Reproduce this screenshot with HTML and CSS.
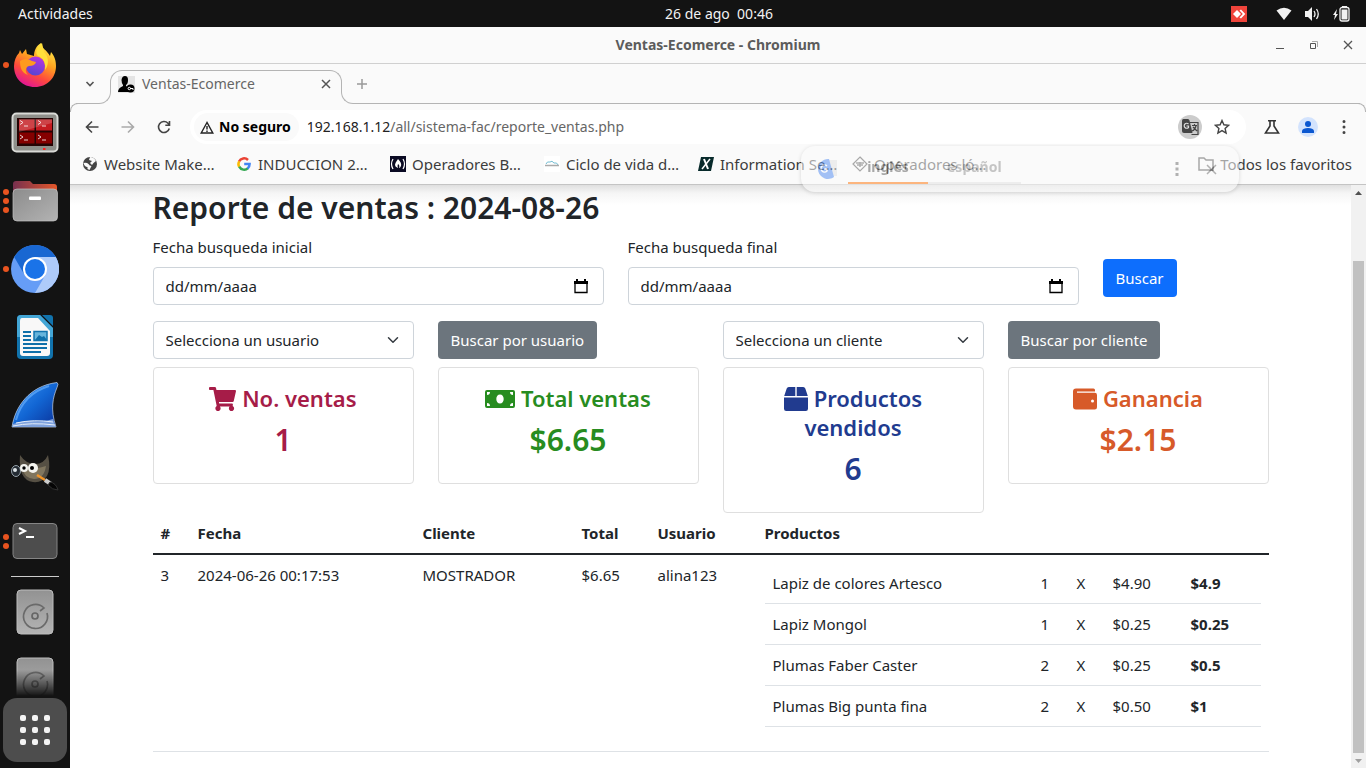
FILE: index.html
```html
<!DOCTYPE html>
<html lang="es">
<head>
<meta charset="utf-8">
<title>Ventas-Ecomerce</title>
<link rel="stylesheet" href="styles.css">
</head>
<body>
<header class="topbar">
  <button class="activities">Actividades</button>
  <button class="clock">26 de ago&nbsp; 00:46</button>
  <div class="indicators">
    <svg class="anydesk" width="16" height="16" viewBox="0 0 16 16"><path fill="#ef443b" d="M0 0h16v16H0z"/><path fill="#fff" d="M2 8l4-4 4 4-4 4zM8.500 4.500L10 3.500 14.300 8 10 12.500 8.500 11.500 11.800 8z"/></svg>
    <svg width="16" height="16" viewBox="0 0 16 16"><path fill="#f2f2f2" d="M.5 4.500Q8-1 15.500 4.500L8 14z"/></svg>
    <svg width="16" height="16" viewBox="0 0 16 16"><path fill="#f2f2f2" d="M1 5h3l4-4v14l-4-4H1z"/><path fill="none" stroke="#f2f2f2" stroke-width="1.300" d="M10 5q2 3 0 6M12.500 3q3.500 5 0 10"/></svg>
    <svg width="18" height="16" viewBox="0 0 18 16"><path fill="#f2f2f2" d="M5 3L1 9h2l-1 5 4-6H4zM10 0h5v2h-5z"/><rect x="8" y="1.500" width="9" height="13.500" rx="2" fill="none" stroke="#f2f2f2" stroke-width="1.300"/><path fill="#f2f2f2" d="M9.500 3.500h6v10h-6z"/></svg>
  </div>
</header>
<div class="desktop">
  <nav class="dock" aria-label="Aplicaciones">
    <div class="dock-list">
      <button class="dock-item" aria-label="Firefox"><span class="dots"><i></i></span>
        <svg width="48" height="48" viewBox="0 0 48 48"><defs><linearGradient id="ff" x1=".8" y1="0" x2=".3" y2="1"><stop offset="0" stop-color="#fff44f"/><stop offset=".4" stop-color="#ffa21f"/><stop offset=".7" stop-color="#ff4a3c"/><stop offset="1" stop-color="#e0139a"/></linearGradient><linearGradient id="fp" x1=".7" y1="0" x2=".3" y2="1"><stop offset="0" stop-color="#b833e1"/><stop offset="1" stop-color="#5346d0"/></linearGradient></defs><path fill="url(#ff)" d="M24 46C11 46 3 37 3 25c0-5 2-10 5-13l1-3 2 4 4-5 1 5 7 2c0-5 2-10 7-13 0 5 6 7 9 13l1-4c4 5 5 9 5 14 0 12-9 21-21 21z"/><circle cx="24.500" cy="25" r="9.500" fill="url(#fp)"/><path fill="#ff9a1f" d="M9 20q6-4 12 0l4 1q-1 4-7 4c-4 1-4 6-1 9-6-2-8-7-8-14z"/><path fill="#ffdf3b" d="M31 2c-6 5-7 10-4 13 6 2 8 8 7 14 5-7 3-14-1-18z"/></svg></button>
      <button class="dock-item" aria-label="Terminator"><svg width="48" height="44" viewBox="0 0 48 44"><rect x="1.500" y="2.500" width="45" height="38" rx="4" fill="#8e8f8a" stroke="#d9dad6" stroke-width="2"/><path fill="#260404" d="M6 7h36v28H6z"/><path fill="#c41a20" d="M8 8.500h15.500v11H8zM25 8.500h16v11H25z"/><path fill="#850000" d="M8 21.500h15.500v11H8zM25 21.500h16v11H25z"/><path fill="#fff" opacity=".18" d="M8 8h33v4L8 21z"/><path fill="none" stroke="#fff" stroke-width=".8" d="M9 9.500l3 2-3 2M13 15h4M27 9.500l3 2-3 2M31 15h4M9 24l3 2-3 2M13 29h4M27 24l3 2-3 2M31 29h4"/><path fill="#f22" d="M32 37h2.500v2H32z"/></svg></button>
      <button class="dock-item" aria-label="Archivos"><span class="dots"><i></i><i></i><i></i></span><svg width="48" height="44" viewBox="0 0 48 44"><defs><linearGradient id="fo"><stop offset="0" stop-color="#77304f"/><stop offset="1" stop-color="#e4572a"/></linearGradient><linearGradient id="fg" x2="1" y2="1"><stop offset="0" stop-color="#8c8c8c"/><stop offset="1" stop-color="#b3b3b3"/></linearGradient></defs><path fill="url(#fo)" d="M2 20V5q0-3 3-3h14l3 3h21q3 0 3 3v12z"/><rect x="2" y="10" width="44.500" height="32" rx="4" fill="url(#fg)" stroke="#c3c3c3" stroke-width=".7"/><rect x="18" y="17.500" width="12" height="3.500" rx="1" fill="#fff"/></svg></button>
      <button class="dock-item" aria-label="Chromium"><span class="dots"><i></i></span><svg width="48" height="48" viewBox="0 0 48 48"><circle cx="24" cy="24" r="24" fill="#669df6"/><path fill="#1967d2" d="M3.200 12A24 24 0 0 1 44.800 12H24L13.600 30z"/><path fill="#aecbfa" d="M44.800 12A24 24 0 0 1 24 48L34.400 30 24 12z"/><circle cx="24" cy="24" r="12" fill="#fff"/><circle cx="24" cy="24" r="10" fill="#1a73e8"/></svg></button>
      <button class="dock-item" aria-label="LibreOffice Writer"><svg width="40" height="46" viewBox="0 0 40 46"><path fill="#1173ad" d="M6 1h19l13 13v27q0 4-4 4H6q-4 0-4-4V5q0-4 4-4z"/><path fill="#43a6d6" d="M6 1h19l13 13v9H2V5q0-4 4-4z"/><path fill="#f8f8f8" d="M7 4h16l12 13v22q0 3-3 3H8q-3 0-3-3V7q0-3 2-3z"/><path fill="#1173ad" d="M27 1h8q3 0 3 3v8z"/><path fill="#67b5dc" stroke="#1173ad" stroke-width="1.500" d="M19 17.500h13v9H19z"/><path fill="#0f70aa" d="M8 17h8v2H8zM8 21h8v2H8zM8 25h8v2H8zM8 29h24v2H8zM8 33h24v2H8zM8 37h18v2H8zM20 26l4-5 3 2 2-1 3 4z"/></svg></button>
      <button class="dock-item" aria-label="Wireshark"><svg width="48" height="48" viewBox="0 0 48 48"><defs><linearGradient id="ws" x2="1" y2="1"><stop offset="0" stop-color="#3a93f4"/><stop offset=".5" stop-color="#1266d4"/><stop offset="1" stop-color="#0a2f96"/></linearGradient></defs><path fill="url(#ws)" stroke="#c5d4e5" stroke-width=".7" d="M1 46C4 26 18 5 46 1.500q2 1 0 5C42 16 39 28 45 46z"/><path fill="#7fa2dd" d="M2 43q12-4 22-3t18-2l2.500 8H1.500z"/><path fill="none" stroke="#e3ecf8" d="M2 45q18-4 42-1M5 42q18-4 37-1"/><path fill="none" stroke="#71b7ff" stroke-width="2" opacity=".6" d="M5 39Q12 13 38 5"/></svg></button>
      <button class="dock-item" aria-label="GIMP"><svg width="48" height="44" viewBox="0 0 48 44"><path fill="#565044" d="M9 4q6 9 15 9T37 4q3 14-1 21-5 7-14 6Q7 29 9 4z"/><path fill="#80765f" d="M11 17q9 3 24-2-2 13-12 13-10-1-12-11z"/><ellipse cx="5" cy="20" rx="4.500" ry="5.500" fill="#242b33" stroke="#96a2aa"/><circle cx="4" cy="19" r="2" fill="#dee5e8"/><circle cx="13" cy="17" r="4" fill="#f3f3ee"/><circle cx="13" cy="17" r="1.700"/><circle cx="22" cy="17" r="5" fill="#f3f3ee"/><circle cx="21" cy="17" r="2"/><path stroke="#f29528" stroke-width="2.500" d="M26 24l8 5"/><path stroke="#ccc" stroke-width="4" d="M34 29l6 4"/><path fill="#050505" stroke="#333" d="M39 31q6 1 8 8-6 0-10-5z"/></svg></button>
      <button class="dock-item" aria-label="Terminal"><span class="dots"><i></i><i></i></span><svg width="46" height="38" viewBox="0 0 46 38"><rect x="1" y="1.500" width="44" height="35" rx="4" fill="#4d4d4d" stroke="#858585"/><path fill="none" stroke="#fff" stroke-width="2" d="M7 6l6 3-6 3M14 15h8"/></svg></button>
      <hr class="dock-line">
      <button class="dock-item" aria-label="Disco 1"><svg width="38" height="46" viewBox="0 0 38 46"><defs><linearGradient id="dk" x2="0" y2="1"><stop offset="0" stop-color="#929292"/><stop offset="1" stop-color="#b4b4b4"/></linearGradient></defs><rect x="1" y="1" width="36" height="44" rx="4" fill="url(#dk)" stroke="#bdbdbd"/><circle cx="19" cy="27" r="3" fill="none" stroke="#666" stroke-width="1.700"/><path fill="none" stroke="#6a6a6a" stroke-width="1.700" d="M24 22l4-3A12 12 0 1 0 31 24"/></svg></button>
      <button class="dock-item" aria-label="Disco 2"><svg width="38" height="46" viewBox="0 0 38 46"><rect x="1" y="1" width="36" height="44" rx="4" fill="url(#dk)" stroke="#bdbdbd"/><circle cx="19" cy="27" r="3" fill="none" stroke="#666" stroke-width="1.700"/><path fill="none" stroke="#6a6a6a" stroke-width="1.700" d="M24 22l4-3A12 12 0 1 0 31 24"/></svg></button>
    </div>
    <button class="apps" aria-label="Mostrar aplicaciones"><i></i><i></i><i></i><i></i><i></i><i></i><i></i><i></i><i></i></button>
  </nav>

  <section class="window">
    <div class="titlebar">
      <strong class="window-title">Ventas-Ecomerce - Chromium</strong>
      <div class="window-buttons">
        <button aria-label="Minimizar"><svg width="12" height="12" viewBox="0 0 12 12"><path stroke="#555" d="M2 9.500h8"/></svg></button>
        <button aria-label="Restaurar"><svg width="12" height="12" viewBox="0 0 12 12"><path fill="none" stroke="#555" d="M2.500 4.500h5v5h-5z"/><path fill="none" stroke="#aaa" d="M4 2.500h5.500V8"/></svg></button>
        <button aria-label="Cerrar ventana"><svg width="12" height="12" viewBox="0 0 12 12"><path stroke="#555" stroke-width="1.300" d="M2 2l8 8M10 2l-8 8"/></svg></button>
      </div>
    </div>
    <div class="tabs">
      <div class="tabs-left"><button aria-label="Buscar pestañas"><svg width="10" height="10" viewBox="0 0 10 10"><path fill="none" stroke="#555" stroke-width="1.600" d="M1.500 3L5 6.500 8.500 3"/></svg></button></div>
      <div class="tab">
        <svg width="17" height="17" viewBox="0 0 17 17"><path fill="#e4e4e4" d="M0 0h17v17H0z"/><path d="M3.500 4Q4 0 7 0t3 4-2 5v1l4 2v4H0q0-4 5-6V9Q3.500 7 3.500 4z"/><circle cx="12.500" cy="12.500" r="4"/><path stroke="#fff" fill="none" d="M12 12.500h3v1.500"/><circle cx="11.300" cy="12.500" r="1.200" fill="none" stroke="#fff"/></svg>
        <span class="tab-title">Ventas-Ecomerce</span>
        <button aria-label="Cerrar pestaña"><svg width="10" height="10" viewBox="0 0 10 10"><path stroke="#555" stroke-width="1.500" d="M1 1l8 8M9 1L1 9"/></svg></button>
      </div>
      <div class="tabs-right"><button aria-label="Nueva pestaña"><svg width="12" height="12" viewBox="0 0 12 12"><path stroke="#999" stroke-width="1.500" d="M6 1v10M1 6h10"/></svg></button></div>
    </div>
    <div class="toolbar">
      <div class="nav-buttons">
        <button aria-label="Atrás"><svg width="14" height="14" viewBox="0 0 14 14"><path fill="none" stroke="#444" stroke-width="1.600" d="M13.500 7H1.500M7 1.500L1.500 7 7 12.500"/></svg></button>
        <button aria-label="Adelante"><svg width="14" height="14" viewBox="0 0 14 14"><path fill="none" stroke="#aaa" stroke-width="1.600" d="M.5 7h12M7 1.500L12.500 7 7 12.500"/></svg></button>
        <button aria-label="Recargar"><svg width="14" height="14" viewBox="0 0 14 14"><path fill="none" stroke="#444" stroke-width="1.600" d="M12.300 8.500A5.500 5.500 0 1 1 11 3.200L12.500 5M12.500 1v4.200H8.300"/></svg></button>
      </div>
      <div class="omnibox">
        <button class="security"><svg width="14" height="13" viewBox="0 0 14 13"><path fill="none" stroke="#222" stroke-width="1.400" d="M7 1.500L1.200 12h11.600z"/><path stroke="#222" stroke-width="1.400" d="M7 5v3.500M7 9.500V11"/></svg>No seguro</button>
        <div class="url"><b>192.168.1.12</b>/all/sistema-fac/reporte_ventas.php</div>
        <button class="translate-button" aria-label="Traducir"><svg width="17" height="17" viewBox="0 0 17 17"><path fill="#444" d="M1.500 0H6q1 0 1.500 1.500L10.500 14H2q-2 0-2-2V1.500Q0 0 1.500 0z"/><path fill="none" stroke="#444" stroke-width="1.200" d="M8 3.500h8v12H9.500M10 6.500h5M12.500 5v1.500M14 7q-1 4-4 5M11 8l4 4"/><path fill="none" stroke="#ddd" stroke-width="1.200" d="M6.500 5A2.500 2.500 0 1 0 6.500 8.500V7H4.500"/></svg></button>
        <button aria-label="Añadir a favoritos"><svg width="16" height="16" viewBox="0 0 16 16"><path fill="none" stroke="#444" stroke-width="1.400" d="M8 1.500l1.900 4.300 4.700.5-3.500 3.100 1 4.600L8 11.600 3.900 14l1-4.600L1.400 6.300l4.700-.5z"/></svg></button>
      </div>
      <button aria-label="Experimentos"><svg width="16" height="16" viewBox="0 0 16 16"><path fill="none" stroke="#333" stroke-width="1.600" d="M4 1.800h8M6 2v5l-4.500 7h13L10 7V2"/></svg></button>
      <button class="profile" aria-label="Perfil"><svg width="12" height="12" viewBox="0 0 12 12"><circle cx="6" cy="3" r="3" fill="#0b57d0"/><path fill="#0b57d0" d="M0 12V9.500Q1 7 6 7t6 2.500V12z"/></svg></button>
      <button aria-label="Menú"><svg width="4" height="16" viewBox="0 0 4 16"><path fill="#444" d="M2 1a1.500 1.500 0 1 1 0 3 1.500 1.500 0 0 1 0-3zM2 6.500a1.500 1.500 0 1 1 0 3 1.500 1.500 0 0 1 0-3zM2 12a1.500 1.500 0 1 1 0 3 1.500 1.500 0 0 1 0-3z"/></svg></button>
    </div>
    <nav class="bookmarks" aria-label="Favoritos">
      <a href="#"><svg width="16" height="16" viewBox="0 0 16 16"><circle cx="8" cy="8" r="7" fill="#444"/><path fill="#fafafa" d="M1.500 7q3-1 5 1 1 2 3 2-1 2-2 4l-2-1V11q-3 0-4-4zM8 1q4 0 6 4-3 2-4 4L8 7l2-2-3-1z"/></svg><span>Website Make…</span></a>
      <a href="#"><svg width="16" height="14" viewBox="-1 0 16 14" fill="none" stroke-width="2.500"><path stroke="#ea4335" d="M2 4.500A5.600 5.600 0 0 1 11 3"/><path stroke="#fbbc05" d="M2.200 4.300a5.500 5.500 0 0 0 0 5.500"/><path stroke="#34a853" d="M2.200 9.700A5.600 5.600 0 0 0 11 11.200"/><path stroke="#4285f4" d="M7.200 7h5.400q0 2.800-2 4.500"/></svg><span>INDUCCION 2…</span></a>
      <a href="#"><svg width="16" height="16" viewBox="0 0 16 16"><path fill="#0a0a23" d="M0 0h16v16H0z"/><path fill="none" stroke="#fff" stroke-width="1.200" d="M3 3Q0 8 3 13M13 3q3 5 0 10"/><path fill="#fff" d="M8 3q4 4 3 7-1 2-2 2 1-3-1-4-1 2 0 4-3-1-3-3 0-2 3-6z"/></svg><span>Operadores B…</span></a>
      <a href="#"><svg width="16" height="16" viewBox="0 0 16 16"><path fill="#fff" d="M0 0h16v16H0z"/><path fill="none" stroke="#75bed3" d="M2 8q1-3 4-2 2-2 4 1 3-1 4 2"/><path stroke="#aaa" stroke-width="1.500" d="M1 9.500h14"/></svg><span>Ciclo de vida d…</span></a>
      <a href="#"><svg width="16" height="14" viewBox="0 0 16 14"><path fill="#082a2b" d="M3 0h13l-3 14H0z"/><path stroke="#fff" stroke-width="2" d="M6 2l4 10"/><path stroke="#fff" stroke-width="1.500" d="M12 2L4 12"/></svg><span>Information Se…</span></a>
      <a href="#"><svg width="16" height="16" viewBox="0 0 16 16"><path fill="none" stroke="#444" stroke-width="1.200" d="M8 1l7 7-7 7-7-7z"/><path stroke="#555" stroke-width="1.500" d="M4 7h8M5 9h6M8 6v5"/></svg><span>Operadores ló…</span></a>
      <a class="all-bookmarks" href="#"><svg width="16" height="14" viewBox="0 0 16 14"><path fill="none" stroke="#444" stroke-width="1.500" d="M1 1h5l2 2h7v10H1z"/></svg><span>Todos los favoritos</span></a>
    </nav>
    <div class="translate-popup">
      <svg width="22" height="22" viewBox="0 0 22 22"><path fill="#e3e3e3" d="M10 2h10v16H10z"/><path fill="#5b92f1" d="M12 1L17 19A10 10 0 1 1 12 1z"/><path fill="none" stroke="#fff" stroke-width="1.500" d="M10 8a3.500 3.500 0 1 0 0 5v-2H7"/></svg>
      <button class="lang lang-active">inglés</button><button class="lang">español</button>
      <button class="popup-more" aria-label="Opciones"><svg width="4" height="14" viewBox="0 0 4 14"><path fill="#777" d="M.5 0h3v3h-3zM.5 5.500h3v3h-3zM.5 11h3v3h-3z"/></svg></button>
      <button aria-label="Cerrar traducción"><svg width="12" height="12" viewBox="0 0 12 12"><path stroke="#777" stroke-width="1.500" d="M2 2l9 9M11 2l-9 9"/></svg></button>
    </div>

    <div class="viewport">
      <main class="page">
        <div class="container">
          <h2>Reporte de ventas : 2024-08-26</h2>
          <form class="grid dates">
            <div class="span5">
              <label for="inicio">Fecha busqueda inicial</label>
              <div class="date"><input id="inicio" type="text" placeholder="dd/mm/aaaa"><svg width="14" height="15" viewBox="0 0 14 15"><path d="M0 2h14v3H0zM2 0h2v3H2zM10 0h2v3h-2z"/><path fill="none" stroke="#000" stroke-width="1.300" d="M1 3h12v10.500H1z"/></svg></div>
            </div>
            <div class="span5">
              <label for="final">Fecha busqueda final</label>
              <div class="date"><input id="final" type="text" placeholder="dd/mm/aaaa"><svg width="14" height="15" viewBox="0 0 14 15"><path d="M0 2h14v3H0zM2 0h2v3H2zM10 0h2v3h-2z"/><path fill="none" stroke="#000" stroke-width="1.300" d="M1 3h12v10.500H1z"/></svg></div>
            </div>
            <div class="span2 search"><button class="btn primary" type="button">Buscar</button></div>
          </form>
          <form class="grid filters">
            <div class="span3 select"><select aria-label="Usuario"><option>Selecciona un usuario</option></select><svg width="12" height="12" viewBox="0 0 16 16"><path fill="none" stroke="#343a40" stroke-width="2" stroke-linecap="round" stroke-linejoin="round" d="M2 5l6 6 6-6"/></svg></div>
            <div class="span3"><button class="btn secondary" type="button">Buscar por usuario</button></div>
            <div class="span3 select"><select aria-label="Cliente"><option>Selecciona un cliente</option></select><svg width="12" height="12" viewBox="0 0 16 16"><path fill="none" stroke="#343a40" stroke-width="2" stroke-linecap="round" stroke-linejoin="round" d="M2 5l6 6 6-6"/></svg></div>
            <div class="span3"><button class="btn secondary" type="button">Buscar por cliente</button></div>
          </form>
          <div class="grid cards">
            <article class="span3 card crimson"><h4><svg width="27" height="24" viewBox="0 0 576 512"><path d="M528.120 301.319l47.273-208C578.806 78.301 567.391 64 551.990 64H159.208l-9.166-44.810C147.758 8.021 137.930 0 126.529 0H24C10.745 0 0 10.745 0 24v16c0 13.255 10.745 24 24 24h69.883l70.248 343.435C147.325 417.100 136 435.222 136 456c0 30.928 25.072 56 56 56s56-25.072 56-56c0-15.674-6.447-29.835-16.824-40h209.647C430.447 426.165 424 440.326 424 456c0 30.928 25.072 56 56 56s56-25.072 56-56c0-22.172-12.888-41.332-31.579-50.405l5.517-24.276c3.413-15.018-8.002-29.319-23.403-29.319H218.117l-6.545-32h293.145c11.206 0 20.920-7.754 23.403-18.681z"/></svg> No. ventas</h4><p>1</p></article>
            <article class="span3 card green"><h4><svg width="30" height="24" viewBox="0 0 30 24"><path fill-rule="evenodd" d="M2 3h26q2 0 2 2v14q0 2-2 2H2q-2 0-2-2V5q0-2 2-2zM2 5v3q3 0 3-3zM28 5h-3q0 3 3 3zM2 19h3q0-3-3-3zM28 19v-3q-3 0-3 3zM15 7.500c-2.200 0-3.700 2-3.700 4.500s1.500 4.500 3.700 4.500 3.700-2 3.700-4.500-1.500-4.500-3.700-4.500z"/></svg> Total ventas</h4><p>$6.65</p></article>
            <article class="span3 card blue"><h4><svg width="24" height="24" viewBox="0 0 24 24"><path d="M2.700 1.500Q3.200 0 4.800 0h6.500v9H.2zM12.700 0h6.500q1.600 0 2.100 1.500L23.800 9H12.700zM0 10.500h24v11.300q0 2.200-2.200 2.200H2.200Q0 24 0 21.800z"/></svg> Productos vendidos</h4><p>6</p></article>
            <article class="span3 card orange"><h4><svg width="24" height="24" viewBox="0 0 24 24"><path fill-rule="evenodd" d="M3 1.500h17.500q1.500 0 1.500 1.500v1.500H4v1.200h17.800Q24 5.700 24 8v12.200q0 2.300-2.300 2.300H3q-3 0-3-3v-15q0-3 3-3zM19.500 12.500a1.500 1.500 0 1 0 0 3 1.500 1.500 0 0 0 0-3z"/></svg> Ganancia</h4><p>$2.15</p></article>
          </div>
          <table class="sales">
            <colgroup><col class="c-id"><col class="c-date"><col class="c-client"><col class="c-total"><col class="c-user"><col></colgroup>
            <thead><tr><th>#</th><th>Fecha</th><th>Cliente</th><th>Total</th><th>Usuario</th><th>Productos</th></tr></thead>
            <tbody><tr><td>3</td><td>2024-06-26 00:17:53</td><td>MOSTRADOR</td><td>$6.65</td><td>alina123</td><td>
              <table class="items">
                <colgroup><col><col class="c-qty"><col class="c-qty"><col class="c-price"><col class="c-price"></colgroup>
                <tbody>
                  <tr><td>Lapiz de colores Artesco</td><td>1</td><td>X</td><td>$4.90</td><th>$4.9</th></tr>
                  <tr><td>Lapiz Mongol</td><td>1</td><td>X</td><td>$0.25</td><th>$0.25</th></tr>
                  <tr><td>Plumas Faber Caster</td><td>2</td><td>X</td><td>$0.25</td><th>$0.5</th></tr>
                  <tr><td>Plumas Big punta fina</td><td>2</td><td>X</td><td>$0.50</td><th>$1</th></tr>
                </tbody>
              </table>
            </td></tr></tbody>
          </table>
        </div>
      </main>
      <div class="scrollbar">
        <svg width="15" height="15" viewBox="0 0 15 15"><path fill="#505050" d="M4 10l3.500-4L11 10z"/></svg>
        <div class="track"><div class="thumb"></div></div>
        <svg width="15" height="15" viewBox="0 0 15 15"><path fill="#a0a0a0" d="M4 6l3.500 4L11 6z"/></svg>
      </div>
    </div>
  </section>
</div>
</body>
</html>
```
FILE: styles.css
```css
* { box-sizing: border-box; }
body {
  margin: 0;
  height: 100vh;
  display: flex;
  flex-direction: column;
  overflow: hidden;
  background: #131313;
  color: #212529;
  font: 15px/24px "Noto Sans", "Open Sans", sans-serif;
}
button { font: inherit; color: inherit; border: 0; padding: 0; background: none; }
svg { flex: none; }
a { color: inherit; text-decoration: none; }

/* Top bar */
.topbar {
  flex: none;
  height: 27px;
  display: grid;
  grid-template-columns: 1fr auto 1fr;
  align-items: center;
  padding: 0 16px 0 18px;
  background: #131313;
  color: #f2f2f2;
  font-size: 14px;
}
.activities { justify-self: start; }
.topbar .clock { padding-left: 70px; }
.indicators { display: flex; align-items: center; justify-content: flex-end; gap: 12px; }
.anydesk { margin-right: 17px; }

.desktop { flex: 1; min-height: 0; display: flex; }

/* Dock */
.dock { flex: none; width: 70px; display: flex; flex-direction: column; }
.dock-list {
  flex: 1;
  min-height: 0;
  overflow: hidden;
  padding-top: 4px;
  display: flex;
  flex-direction: column;
  mask-image: linear-gradient(#000 calc(100% - 26px), transparent);
}
.dock-item { flex: none; height: 68px; display: flex; align-items: center; justify-content: center; position: relative; }
.dots { position: absolute; left: 3px; top: 0; bottom: 0; display: flex; flex-direction: column; justify-content: center; gap: 3px; }
.dots i { width: 6px; height: 6px; border-radius: 50%; background: #e95420; }
.dock-line { flex: none; width: 48px; height: 1px; margin: 1px auto; border: 0; background: #ccc; }
.apps {
  flex: none;
  height: 64px;
  margin: 2px 3px 6px;
  border-radius: 14px;
  background: #4d4d4d;
  display: grid;
  grid-template-columns: repeat(3, 6px);
  grid-auto-rows: 6px;
  gap: 6px;
  place-content: center;
}
.apps i { background: #f4f4f4; border-radius: 2px; }

/* Browser window */
.window { flex: 1; min-width: 0; display: flex; flex-direction: column; position: relative; background: #fafafa; }
.titlebar {
  flex: none;
  height: 37px;
  display: grid;
  grid-template-columns: 1fr auto 1fr;
  align-items: center;
  padding: 0 12px;
  border-bottom: 1px solid #d0d0d0;
}
.window-title { grid-column: 2; font-size: 14px; color: #5c5c5c; }
.window-buttons { display: flex; justify-content: flex-end; gap: 22px; }
.window-buttons button, .tabs button, .toolbar button, .translate-popup button { display: flex; align-items: center; justify-content: center; }

.tabs { flex: none; height: 40px; display: flex; }
.tabs-left, .tabs-right { position: relative; display: flex; align-items: center; }
.tabs-left { width: 41px; padding-left: 15px; }
.tabs-right { flex: 1; margin-left: -1px; padding-left: 15px; }
.tabs-left::after, .tabs-right::after {
  content: "";
  position: absolute;
  left: 0;
  right: 0;
  bottom: 0;
  height: 12px;
  border-bottom: 1px solid #b4b4b4;
  pointer-events: none;
}
.tabs-left::after { left: 6px; border-right: 1px solid #b4b4b4; border-bottom-right-radius: 12px; }
.tabs-right::after { right: 6px; border-left: 1px solid #b4b4b4; border-bottom-left-radius: 12px; }
.tab { position: relative; width: 232px; margin: 6px 0 0 -1px; padding: 0 11px 6px 8px; display: flex; align-items: center; gap: 7px; color: #666; font-size: 14px; }
.tab::before {
  content: "";
  position: absolute;
  inset: 0 0 12px;
  border: 1px solid #b4b4b4;
  border-bottom: 0;
  border-radius: 12px 12px 0 0;
  pointer-events: none;
}
.tab-title { flex: 1; }

.toolbar { flex: none; position: relative; display: flex; align-items: center; gap: 18px; padding: 6px 20px 4px 15px; }
.toolbar::before, .toolbar::after {
  content: "";
  position: absolute;
  top: -1px;
  width: 8px;
  height: 8px;
  border-top: 1px solid #b4b4b4;
  pointer-events: none;
}
.toolbar::before { left: 0; border-left: 1px solid #b4b4b4; border-top-left-radius: 8px; }
.toolbar::after { right: 0; border-right: 1px solid #b4b4b4; border-top-right-radius: 8px; }
.nav-buttons { display: flex; gap: 22px; margin-right: 1px; }
.omnibox { flex: 1; height: 34px; display: flex; align-items: center; gap: 8px; padding: 0 16px 0 4px; border-radius: 17px; background: #fff; font-size: 14px; }
.toolbar .security { height: 28px; gap: 5px; padding: 0 8px 0 6px; border-radius: 14px; background: #fafafa; color: #000; font-weight: 700; }
.url { flex: 1; color: #666; white-space: nowrap; }
.url b { color: #222; font-weight: 400; }
.translate-button { width: 24px; height: 24px; margin-right: 4px; border-radius: 50%; background: #ccc; }
.profile { width: 20px; height: 20px; margin-right: 6px; border-radius: 50%; background: #d3e3fd; }

.bookmarks { flex: none; height: 37px; display: flex; align-items: center; padding: 0 14px 4px 12px; border-bottom: 1px solid #c4c4c4; color: #3c3c3c; font-size: 15px; white-space: nowrap; }
.bookmarks a { flex: 0 0 154px; display: flex; align-items: center; gap: 6px; }
.bookmarks .all-bookmarks { flex: none; margin-left: auto; }

.translate-popup {
  position: absolute;
  top: 119px;
  right: 127px;
  width: 438px;
  height: 46px;
  display: flex;
  align-items: center;
  padding: 0 22px 0 16px;
  border-radius: 14px;
  background: #fafafa;
  opacity: .55;
  box-shadow: 0 1px 4px #0004;
  font-size: 14px;
  font-weight: 700;
  color: #999;
}
.lang { height: 38px; align-self: flex-start; padding: 6px 19px 0; border-bottom: 2px solid #e4e4e4; flex: 0 0 92px; }
.translate-popup .lang-active { margin-left: 9px; flex-basis: 80px; color: #666; border-color: #ff7d1a; }
.popup-more { margin: 0 26px 0 auto; }

/* Page */
.viewport { flex: 1; min-height: 0; display: flex; }
.page { flex: 1; min-width: 0; overflow: hidden; padding-top: 4px; background: #fff linear-gradient(#dfdfdf, #f5f5f5 8px, #fff 20px) no-repeat; }
.container { max-width: 1140px; margin: 0 auto; padding: 0 12px; }
h2 { margin: 0 0 8px; font-size: 30px; line-height: 38px; font-weight: 600; }
.grid { display: grid; grid-template-columns: repeat(12, minmax(0, 1fr)); column-gap: 24px; align-items: start; }
.span2 { grid-column: span 2; }
.span3 { grid-column: span 3; }
.span5 { grid-column: span 5; }
label { display: block; margin-bottom: 8px; }
.dates { margin-bottom: 16px; }
.date { display: flex; align-items: center; height: 38px; padding: 0 15px 0 12px; border: 1px solid #ced4da; border-radius: 4px; background: #fff; }
.date input { flex: 1; min-width: 0; padding: 0; border: 0; background: none; font: inherit; }
.date input::placeholder { color: #212529; opacity: 1; }
.search { padding-top: 24px; }
.btn { height: 38px; padding: 0 13px; border-radius: 4px; color: #fff; white-space: nowrap; }
.primary { background: #0d6efd; }
.secondary { background: #6c757d; }
.filters { margin-bottom: 8px; }
.select { display: grid; align-items: center; }
.select > * { grid-area: 1 / 1; }
.select svg { justify-self: end; margin-right: 15px; pointer-events: none; }
select { appearance: none; width: 100%; height: 38px; padding: 0 12px; border: 1px solid #ced4da; border-radius: 4px; background: #fff; color: inherit; font: inherit; }

.card { padding: 16px; border: 1px solid #dfdfdf; border-radius: 4px; text-align: center; }
.card h4 { margin: 0 0 8px; font-size: 22px; line-height: 29px; font-weight: 600; }
.card svg { vertical-align: -4px; fill: currentColor; }
.card p { margin: 0 0 8px; font-size: 30px; line-height: 38px; font-weight: 600; }
.crimson { color: #a61c48; }
.green { color: #278c20; }
.blue { color: #213b8f; }
.orange { color: #d75a29; }

table { width: 100%; border-collapse: collapse; table-layout: fixed; }
th, td { padding: 8px; text-align: left; vertical-align: top; }
.sales > tbody > tr > td { border-bottom: 1px solid #dee2e6; }
.sales thead { border-bottom: 2px solid #212529; }
.items { margin-bottom: 16px; }
.items tr { border-bottom: 1px solid #dee2e6; }
.c-id { width: 37px; }
.c-date { width: 225px; }
.c-client { width: 159px; }
.c-total { width: 76px; }
.c-user { width: 107px; }
.c-qty { width: 36px; }
.c-price { width: 78px; }

.scrollbar { flex: none; width: 15px; display: flex; flex-direction: column; background: #f1f1f1; }
.track { flex: 1; display: flex; flex-direction: column; justify-content: flex-end; padding: 0 2px; }
.thumb { height: 89%; background: #c1c1c1; }
```
